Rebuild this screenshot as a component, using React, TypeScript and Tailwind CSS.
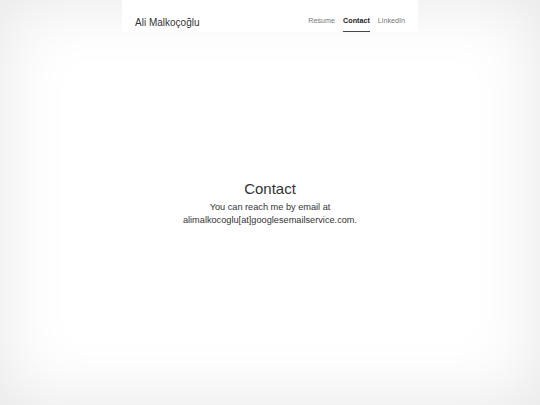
import React from 'react';

const links = [
  { label: 'Resume', active: false },
  { label: 'Contact', active: true },
  { label: 'LinkedIn', active: false },
];

const App: React.FC = () => {
  return (
    <div
      className="relative h-screen w-full bg-white shadow-[inset_0_0_70px_rgba(0,0,0,0.1)] text-[#333]"
      style={{ fontFamily: '"Liberation Sans", Arial, sans-serif' }}
    >
      {/* header floats over the page */}
      <header className="absolute left-1/2 top-0 -translate-x-1/2 w-[296px] h-[32px] bg-white flex items-center justify-between pl-[13px] pr-[13px]">
        <span className="text-[10px] text-[#333] pt-[13px]">Ali Malkoçoğlu</span>
        <nav className="flex items-center gap-[8px] h-full">
          {links.map(link => (
            <a
              key={link.label}
              className={`h-full flex items-center pt-[11px] text-[7.2px] border-b ${
                link.active ? 'font-bold text-[#222] border-[#444]' : 'text-[#777] border-transparent'
              }`}
            >
              {link.label}
            </a>
          ))}
        </nav>
      </header>

      <main className="h-full flex flex-col items-center justify-center text-center pt-[2px]">
        <h1 className="text-[15px] leading-[18px] text-[#333]">Contact</h1>
        <p className="mt-[3px] text-[9.2px] leading-[13px] text-[#333]">
          You can reach me by email at
          <br />
          alimalkocoglu[at]googlesemailservice.com.
        </p>
      </main>
    </div>
  );
};

export default App;
